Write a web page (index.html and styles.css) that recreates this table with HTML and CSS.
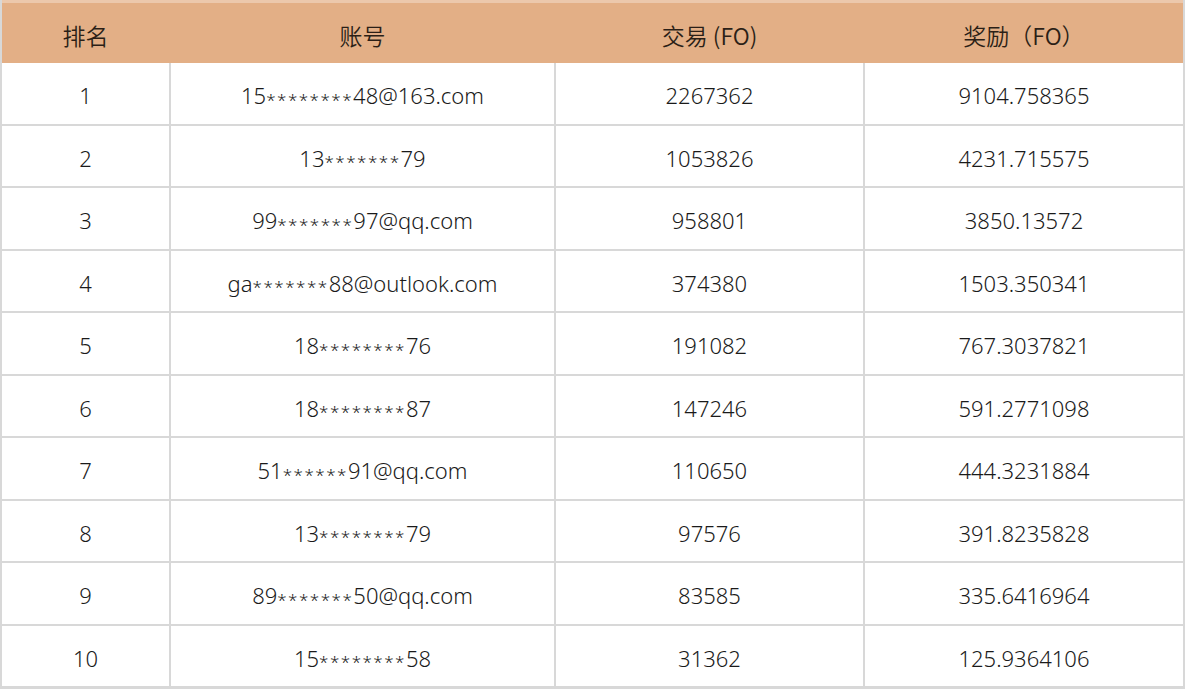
FILE: index.html
```html
<!DOCTYPE html>
<html lang="zh-CN">
<head>
<meta charset="utf-8">
<title>排名</title>
<link rel="stylesheet" href="styles.css">
</head>
<body>
<div class="table">
  <div class="head">
    <div class="cell">排名</div>
    <div class="cell">账号</div>
    <div class="cell">交易 (FO)</div>
    <div class="cell">奖励（FO）</div>
  </div>
  <div class="row"><div class="cell">1</div><div class="cell">15<span class="mask">********</span>48@163.com</div><div class="cell">2267362</div><div class="cell">9104.758365</div></div>
  <div class="row"><div class="cell">2</div><div class="cell">13<span class="mask">*******</span>79</div><div class="cell">1053826</div><div class="cell">4231.715575</div></div>
  <div class="row"><div class="cell">3</div><div class="cell">99<span class="mask">*******</span>97@qq.com</div><div class="cell">958801</div><div class="cell">3850.13572</div></div>
  <div class="row"><div class="cell">4</div><div class="cell">ga<span class="mask">*******</span>88@outlook.com</div><div class="cell">374380</div><div class="cell">1503.350341</div></div>
  <div class="row"><div class="cell">5</div><div class="cell">18<span class="mask">********</span>76</div><div class="cell">191082</div><div class="cell">767.3037821</div></div>
  <div class="row"><div class="cell">6</div><div class="cell">18<span class="mask">********</span>87</div><div class="cell">147246</div><div class="cell">591.2771098</div></div>
  <div class="row"><div class="cell">7</div><div class="cell">51<span class="mask">******</span>91@qq.com</div><div class="cell">110650</div><div class="cell">444.3231884</div></div>
  <div class="row"><div class="cell">8</div><div class="cell">13<span class="mask">********</span>79</div><div class="cell">97576</div><div class="cell">391.8235828</div></div>
  <div class="row"><div class="cell">9</div><div class="cell">89<span class="mask">*******</span>50@qq.com</div><div class="cell">83585</div><div class="cell">335.6416964</div></div>
  <div class="row"><div class="cell">10</div><div class="cell">15<span class="mask">********</span>58</div><div class="cell">31362</div><div class="cell">125.9364106</div></div>
</div>
</body>
</html>
```

FILE: styles.css
```css
html, body {
  margin: 0;
  padding: 0;
  background: #ffffff;
}

body {
  font-family: "Noto Sans", "Noto Sans CJK SC", sans-serif;
  font-size: 22px;
  font-weight: 300;
  color: #1a1a1a;
}

.table {
  width: 1185px;
  box-sizing: border-box;
  border-left: 2px solid #d8d8d8;
  border-right: 2px solid #d8d8d8;
  border-bottom: 3px solid #d8d8d8;
}

.head,
.row {
  display: grid;
  grid-template-columns: 167px 383px 307px 318px;
  column-gap: 2px;
}

.head {
  background: #e3af86;
  border-top: 3px solid #ecc8ac;
  height: 60px;
  color: #2b1f17;
  font-family: "Noto Sans CJK SC", "Noto Sans", sans-serif;
  font-size: 23px;
  font-weight: 350;
}

.row {
  background: #d8d8d8;
  height: 60.5px;
}

.row + .row {
  border-top: 2px solid #d8d8d8;
}

.cell {
  display: flex;
  align-items: center;
  justify-content: center;
  white-space: nowrap;
}

.row .cell {
  background: #ffffff;
  padding-top: 4px;
  box-sizing: border-box;
}

.head .cell {
  padding-top: 4px;
  box-sizing: border-box;
}

.mask {
  font-size: 17px;
  letter-spacing: 1.5px;
  position: relative;
  top: 4px;
}
```
